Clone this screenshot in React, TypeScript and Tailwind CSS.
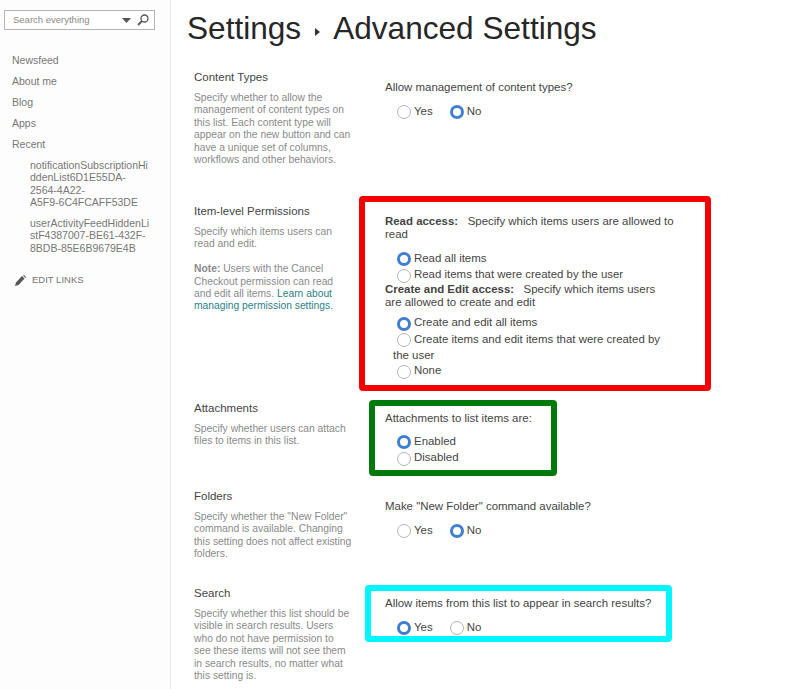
import { ReactNode } from "react";

function Radio({ on, label }: { on?: boolean; label: string }) {
  return (
    <span className="inline-flex items-center">
      <span
        className={`inline-block w-[14px] h-[14px] rounded-full mt-[2px] mr-[3px] bg-white ${
          on ? "border-[3.5px] border-[#3f7fd2]" : "border border-[#b4b4b4]"
        }`}
      />
      {label}
    </span>
  );
}

function YesNo({ yes }: { yes?: boolean }) {
  return (
    <div className="flex gap-[17px] ml-[12px] mt-[9px] h-[16px] items-center">
      <Radio on={yes} label="Yes" />
      <Radio on={!yes} label="No" />
    </div>
  );
}

function Line({ on, label }: { on?: boolean; label: string }) {
  return (
    <div className="ml-[12px] h-[16.5px] flex items-center">
      <Radio on={on} label={label} />
    </div>
  );
}

function Row({ title, desc, height, children }: { title: string; desc: ReactNode; height: string; children: ReactNode }) {
  return (
    <section className={`relative flex ${height}`}>
      <div className="w-[191px] shrink-0 pr-[33px]">
        <h3 className="text-[11.5px] leading-[14px] text-[#444444]">{title}</h3>
        <div className="mt-[8px] text-[10.3px] leading-[12.4px] text-[#8a8a8a]">{desc}</div>
      </div>
      <div className="flex-1 pt-[11px] pr-[125px] text-[11.45px] leading-[13px] text-[#444444]">{children}</div>
    </section>
  );
}

const nav = ["Newsfeed", "About me", "Blog", "Apps", "Recent"];

export default function App() {
  return (
    <div className="flex w-[800px] h-[689px] overflow-hidden bg-white font-['Liberation_Sans',Arial,sans-serif]">
      <aside className="w-[171px] shrink-0 bg-[#fdfdfd] border-r border-[#ececec] pl-[4px]">
        <div className="mt-[10px] w-[151px] h-[20px] border border-[#b4b4b4] bg-white flex items-center pl-[8px] pr-[5px]">
          <span className="flex-1 text-[9.5px] text-[#8a8a8a]">Search everything</span>
          <svg width="9" height="5" viewBox="0 0 9 5" className="mr-[6px]">
            <path d="M0 0h9L4.500 5z" fill="#555555" />
          </svg>
          <svg width="12" height="12" viewBox="0 0 12 12" fill="none" stroke="#555555">
            <circle cx="7.500" cy="4.500" r="3.500" strokeWidth="1.300" />
            <path d="M5 7L1 11" strokeWidth="1.800" />
          </svg>
        </div>
        <nav className="mt-[20px] pl-[8px] text-[10.5px] text-[#777777]">
          {nav.map((n) => (
            <div key={n} className="h-[21.1px] leading-[21px]">{n}</div>
          ))}
          <div className="mt-[3.5px] ml-[18px] w-[122px] leading-[12.500px] break-all">
            <p>notificationSubscriptionHiddenList6D1E55DA-<br />2564-4A22-<br />A5F9-6C4FCAFF53DE</p>
            <p className="mt-[8px]">userActivityFeedHiddenListF4387007-BE61-432F-<br />8BDB-85E6B9679E4B</p>
          </div>
          <div className="mt-[19px] ml-[3px] flex items-center text-[9.500px]">
            <svg width="11" height="11" viewBox="0 0 11 11" className="mr-[6px]">
              <path d="M0 11l1-3.500 6-6.500 2.500 2.500-6 6.500z" fill="#555555" />
              <path d="M8 .5l2.500 2.500 .5-1L9 0z" fill="#555555" />
            </svg>
            EDIT LINKS
          </div>
        </nav>
      </aside>

      <main className="flex-1 pl-[16px]">
        <h1 className="mt-[9px] h-[61px] flex items-start text-[31.6px] leading-[38px] text-[#262626]">
          Settings
          <svg width="5" height="8" viewBox="0 0 5 8" className="mx-[13.5px] mt-[19px]">
            <path d="M0 0l5 4-5 4z" fill="#333333" />
          </svg>
          Advanced Settings
        </h1>

        <div className="pl-[7px]">
          <Row
            title="Content Types"
            height="h-[134px]"
            desc="Specify whether to allow the management of content types on this list. Each content type will appear on the new button and can have a unique set of columns, workflows and other behaviors."
          >
            Allow management of content types?
            <YesNo />
          </Row>

          <Row
            title="Item-level Permissions"
            height="h-[197px]"
            desc={
              <>
                <p>Specify which items users can read and edit.</p>
                <p className="mt-[12.4px]">
                  <b>Note:</b> Users with the Cancel Checkout permission can read and edit all items.{" "}
                  <span className="text-[#2a7f86]">Learn about managing permission settings.</span>
                </p>
              </>
            }
          >
            <p><b>Read access:</b>&nbsp;&nbsp; Specify which items users are allowed to read</p>
            <div className="mt-[9px]">
              <Line on label="Read all items" />
              <Line label="Read items that were created by the user" />
            </div>
            <p><b>Create and Edit access:</b>&nbsp;&nbsp; Specify which items users<br />are allowed to create and edit</p>
            <div className="mt-[5.5px]">
              <Line on label="Create and edit all items" />
              <Line label="Create items and edit items that were created by" />
              <div className="ml-[8px] h-[15px] leading-[15px]">the user</div>
              <Line label="None" />
            </div>
            <div className="absolute left-[165px] top-[-8px] w-[352px] h-[195px] border-[6px] border-[#f40000] rounded-[4px]" />
          </Row>

          <Row
            title="Attachments"
            height="h-[88px]"
            desc="Specify whether users can attach files to items in this list."
          >
            Attachments to list items are:
            <div className="mt-[8px]">
              <Line on label="Enabled" />
              <Line label="Disabled" />
            </div>
            <div className="absolute left-[175px] top-[-1px] w-[188px] h-[76px] border-[6px] border-[#007a0c] rounded-[4px]" />
          </Row>

          <Row
            title="Folders"
            height="h-[97px]"
            desc={'Specify whether the "New Folder" command is available. Changing this setting does not affect existing folders.'}
          >
            Make "New Folder" command available?
            <YesNo />
          </Row>

          <Row
            title="Search"
            height="h-[103px]"
            desc="Specify whether this list should be visible in search results. Users who do not have permission to see these items will not see them in search results, no matter what this setting is."
          >
            Allow items from this list to appear in search results?
            <YesNo yes />
            <div className="absolute left-[171px] top-[-1px] w-[307px] h-[57px] border-[6px] border-[#00f6ff] rounded-[4px]" />
          </Row>
        </div>
      </main>
    </div>
  );
}
